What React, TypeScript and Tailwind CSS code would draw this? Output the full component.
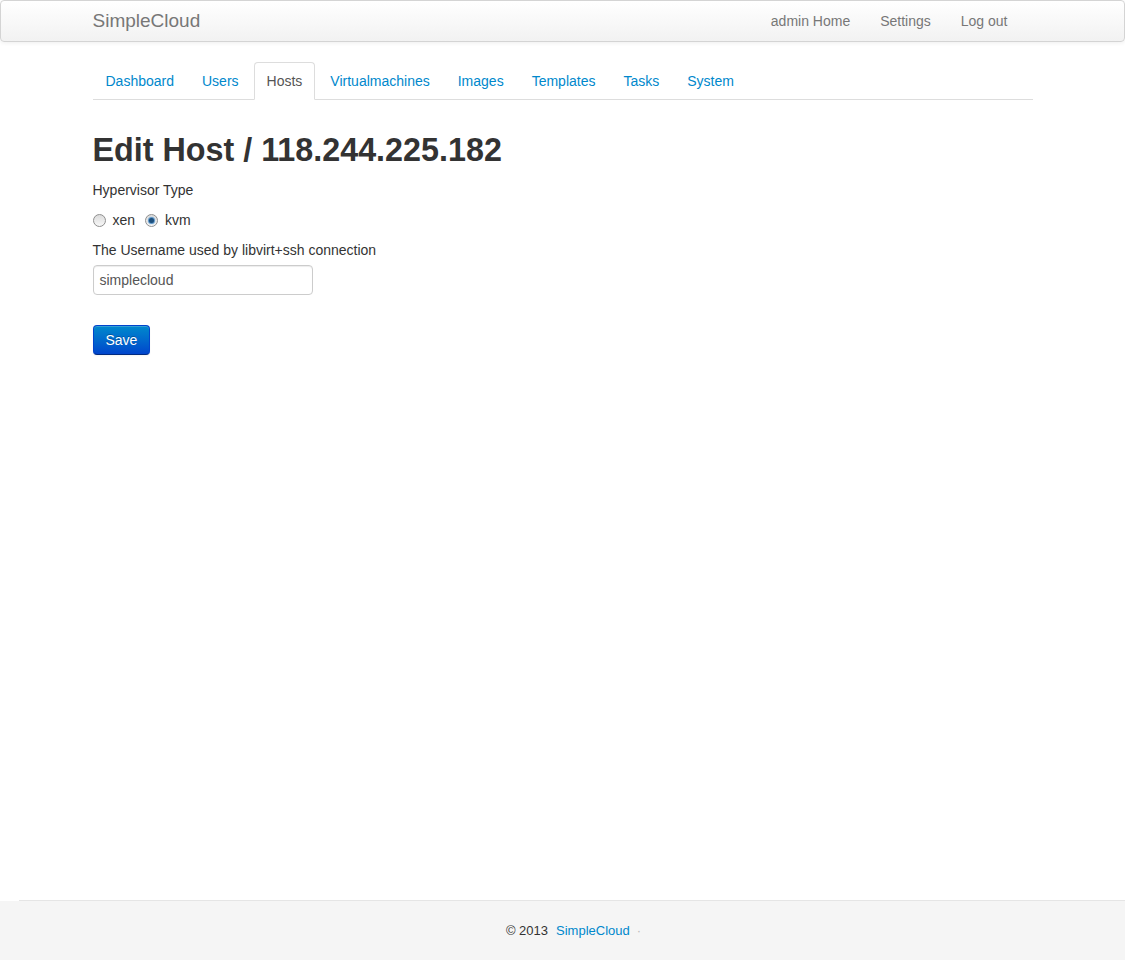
import React from 'react';

const tabs = ['Dashboard', 'Users', 'Hosts', 'Virtualmachines', 'Images', 'Templates', 'Tasks', 'System'];

const Radio: React.FC<{ checked?: boolean }> = ({ checked }) => (
    <span className="inline-flex h-[13px] w-[13px] items-center justify-center rounded-full border border-[#8f8f8f] bg-gradient-to-b from-[#dcdcdc] to-[#f8f8f8]">
        {checked && <span className="h-[5px] w-[5px] rounded-full bg-[#1d4f7c] shadow-[0_0_1px_1px_#4c8cc4]" />}
    </span>
);

const App: React.FC = () => {
    return (
        <div className="flex min-h-screen flex-col bg-white text-[14px] leading-[20px] text-[#333]" style={{ fontFamily: '"Liberation Sans", Arial, sans-serif' }}>
            <div className="h-[42px] rounded-[4px] border border-[#d4d4d4] bg-gradient-to-b from-white to-[#f2f2f2] shadow-[0_1px_4px_rgba(0,0,0,0.065)]">
                <div className="mx-auto flex h-[40px] w-[940px] items-center justify-between">
                    <span className="text-[19px] leading-[20px] text-[#777]">SimpleCloud</span>
                    <ul className="mr-[10px] flex">
                        {['admin Home', 'Settings', 'Log out'].map((l) => (
                            <li key={l} className="px-[15px] py-[10px] text-[#777]">{l}</li>
                        ))}
                    </ul>
                </div>
            </div>

            <div className="mx-auto mt-[20px] w-[940px]">
                <ul className="mb-[30px] flex border-b border-[#ddd]">
                    {tabs.map((t) =>
                        t === 'Hosts' ? (
                            <li key={t} className="-mb-px mr-[2px] rounded-t-[4px] border border-[#ddd] border-b-transparent bg-white px-[12px] py-[8px] text-[#555]">{t}</li>
                        ) : (
                            <li key={t} className="-mb-px mr-[2px] border border-transparent px-[12px] py-[8px] text-[#0088cc]">{t}</li>
                        )
                    )}
                </ul>

                <h2 className="mb-[10px] text-[32.3px] font-bold leading-[40px] text-[#333]">Edit Host / 118.244.225.182</h2>

                <div>Hypervisor Type</div>
                <div className="mt-[10px] flex h-[20px] items-center">
                    <Radio />
                    <span className="ml-[7px] mr-[10px]">xen</span>
                    <Radio checked />
                    <span className="ml-[7px]">kvm</span>
                </div>

                <div className="mt-[10px]">The Username used by libvirt+ssh connection</div>
                <div className="mt-[5px] flex h-[30px] w-[220px] items-center rounded-[4px] border border-[#ccc] px-[6px] text-[#555] shadow-[inset_0_1px_1px_rgba(0,0,0,0.075)]">
                    simplecloud
                </div>

                <button className="mt-[30px] h-[30px] rounded-[4px] border border-[#0044cc] border-b-[#002a80] bg-gradient-to-b from-[#0088cc] to-[#0044cc] px-[12px] text-[14px] text-white [text-shadow:0_-1px_0_rgba(0,0,0,0.25)] shadow-[inset_0_1px_0_rgba(255,255,255,0.2),0_1px_2px_rgba(0,0,0,0.05)]">
                    Save
                </button>
            </div>

            <footer className="mt-auto h-[60px] bg-[#f5f5f5]">
                <div className="flex h-px">
                    <div className="w-[19px] bg-white" />
                    <div className="flex-1 bg-[#e5e5e5]" />
                </div>
                <div className="flex h-[59px] items-center justify-center text-[13px] text-[#333]">
                    <span className="ml-[22px]">© 2013</span>
                    <span className="ml-[8px] text-[#0088cc]">SimpleCloud</span>
                    <span className="ml-[7px] text-[#bbb]">·</span>
                </div>
            </footer>
        </div>
    );
};

export default App;
